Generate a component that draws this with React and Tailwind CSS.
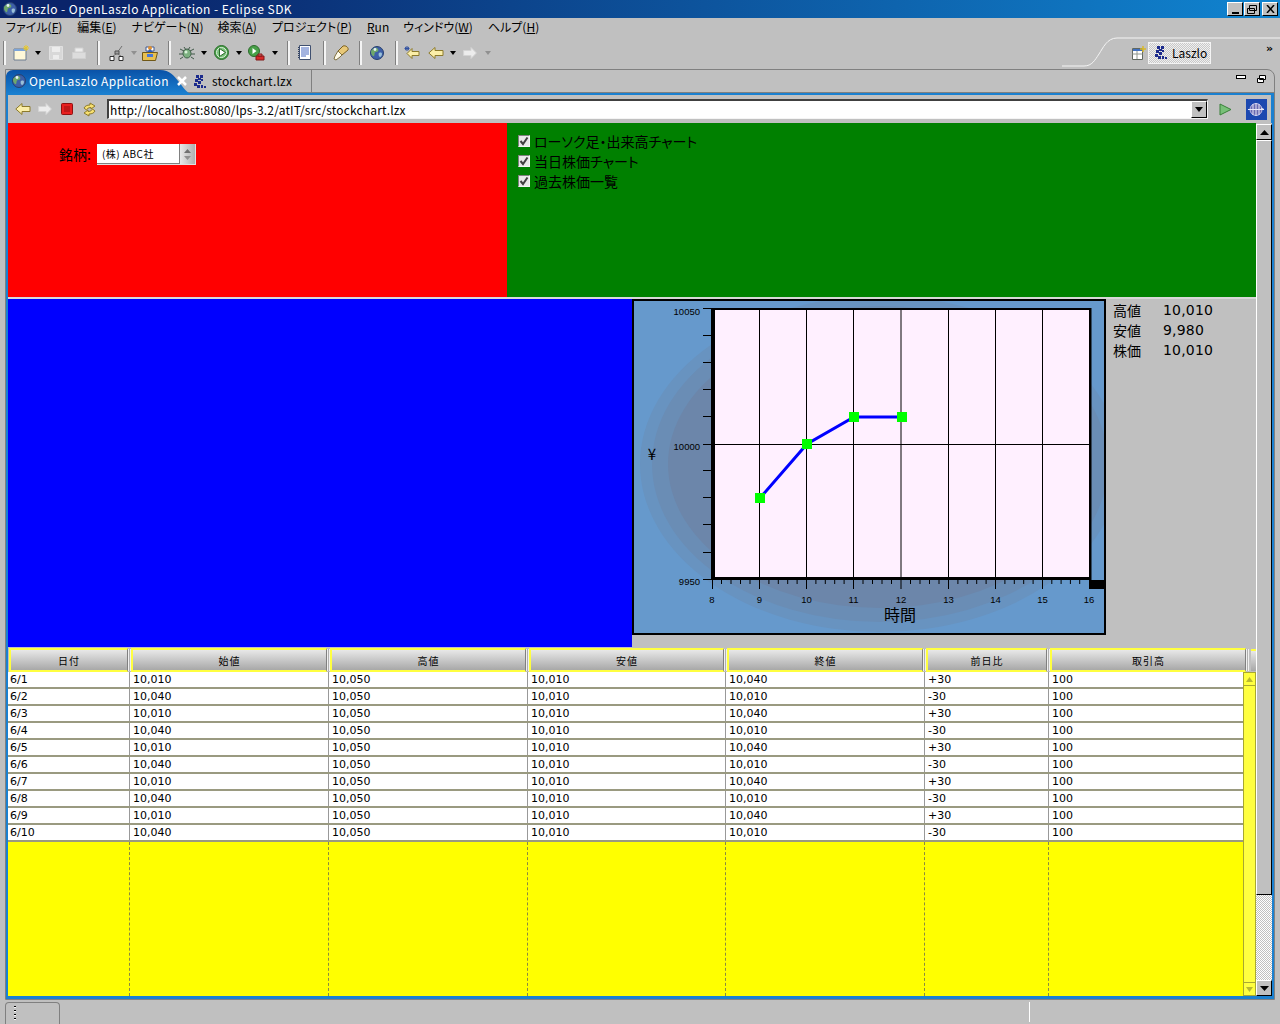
import React from "react";

const UI = "font-['Noto_Sans_CJK_JP','Liberation_Sans',sans-serif] [font-feature-settings:'palt']";
const DV = "font-['DejaVu_Sans','Noto_Sans_CJK_JP',sans-serif]";
const RAISED = "border border-t-white border-l-white border-r-black border-b-black";

const Sep = ({ className }) => <div className={"w-[3px] h-[24px] bg-[#f4f4f4] border-l border-[#808080] shrink-0 " + className} />;
const Drop = ({ className, dim }) => (
  <svg width="6" height="4" viewBox="0 0 6 4" className={"shrink-0 " + className}>
    <path d="M0 0h6L3 4z" fill={dim ? "#909090" : "#000"} />
  </svg>
);
const Ico = ({ className, w = 16, h = 16, children }) => (
  <svg width={w} height={h} viewBox={`0 0 ${w} ${h}`} className={"shrink-0 " + (className || "")}>{children}</svg>
);

const Back = ({ className, dim }) => (
  <Ico className={className} w={16} h={12}>
    <path d="M7 .5L.8 6 7 11.5V8.5h8v-5H7z" fill="#fbeea8" stroke="#8c7a2c" />
  </Ico>
);
const Fwd = ({ className }) => (
  <Ico className={className} w={14} h={12}>
    <path d="M8 .5L13.4 6 8 11.5V8.5H.6v-5H8z" fill="#ececec" stroke="#d4d4d4" />
  </Ico>
);
const Globe = ({ className, s = 14 }) => (
  <svg width={s} height={s} viewBox="0 0 14 14" className={"shrink-0 " + (className || "")}>
    <circle cx="7" cy="7" r="6.5" fill="#3d5fa8" stroke="#27406f" />
    <path d="M3 3c2-2 4-1 5 0s0 3-2 3-1 3-2 4-3-2-3-4 1-2 2-3z" fill="#6fa86a" />
    <path d="M9 7c2-1 3 0 3 1s-1 3-2 3-2-3-1-4z" fill="#9ac0d8" />
    <circle cx="5" cy="3.5" r="1.4" fill="#e8f0f8" />
  </svg>
);
const Lz = ({ className }) => (
  <Ico className={className} w={13} h={13}>
    <g fill="#1c2b8c">
      <rect x="2" y="0" width="3" height="3" /><rect x="6" y="0" width="3" height="3" />
      <rect x="4" y="3" width="3" height="2" /><rect x="1" y="4" width="3" height="3" />
      <rect x="7" y="4" width="2" height="2" /><rect x="4" y="6" width="3" height="3" />
      <rect x="0" y="8" width="3" height="3" /><rect x="3" y="10" width="3" height="3" />
      <rect x="7" y="10" width="2" height="3" /><rect x="10" y="11" width="2" height="2" />
    </g>
  </Ico>
);

function MainToolbar() {
  return (
    <div className="h-[33px] flex items-center shrink-0">
      <Sep className="ml-[3px]" />
      <Ico className="ml-[7px]" w={17}>
        <path d="M1 4h12v11H1z" fill="#fff8d8" stroke="#6c7c90" /><path d="M1 4h12v2H1z" fill="#7ca4d8" />
        <path d="M13 0v6M10 3h6M11 1l4 4M15 1l-4 4" stroke="#e8c828" />
      </Ico>
      <Drop className="ml-[5px]" />
      <Ico className="ml-[8px]" w={14} h={14}>
        <path d="M.5.5h13v13H.5z" fill="#d8d8d8" stroke="#e0e0e0" /><path d="M3 1h8v5H3zM4 9h6v4H4z" fill="#ececec" />
      </Ico>
      <Ico className="ml-[9px]" w={14} h={12}>
        <path d="M3 1h8v4H3z" fill="#ececec" stroke="#d0d0d0" /><path d="M.5 5.5h13v6H.5z" fill="#dcdcdc" stroke="#d0d0d0" />
      </Ico>
      <Sep className="ml-[11px]" />
      <Ico className="ml-[8px]" w={18}>
        <path d="M9 8L4 12M9 8l5 4M9 8l5-7" stroke="#707070" fill="none" />
        <path d="M2 11.500h4v4H2zM11 11.500h4v4h-4z" fill="#fff" stroke="#303030" /><path d="M7 6h4v3H7z" fill="#a0a0a0" stroke="#505050" />
      </Ico>
      <Drop className="ml-[5px]" dim />
      <Ico className="ml-[5px]" w={16}>
        <path d="M.5 7.500h15l-2 8H.5z" fill="#e8c050" stroke="#705818" /><path d="M4 6h8V2H4z" fill="#fff" stroke="#405890" />
        <circle cx="8" cy="3" r="2" fill="#e09030" /><path d="M5 7l3-3 3 3z" fill="#3060c0" /><path d="M5 9h6v3H5z" fill="#4878d8" />
      </Ico>
      <Sep className="ml-[10px]" />
      <Ico className="ml-[8px]" w={16}>
        <ellipse cx="8" cy="8.500" rx="4" ry="4.500" fill="#7cb080" stroke="#3f5f48" />
        <path d="M1 4l4 2M15 4l-4 2M0 9h4M16 9h-4M1 14l3-2M15 14l-3-2M5 2l2 3M11 2L9 5" stroke="#405848" />
        <circle cx="7" cy="7" r="1.500" fill="#d8f0d8" />
      </Ico>
      <Drop className="ml-[6px]" />
      <Ico className="ml-[7px]" w={15} h={15}>
        <circle cx="7.500" cy="7.500" r="7" fill="#48a048" stroke="#2c6c2c" /><circle cx="7.500" cy="7.500" r="5" fill="#78c078" stroke="#e0f0e0" />
        <path d="M5.500 3.500l6 4-6 4z" fill="#fff" stroke="#286828" />
      </Ico>
      <Drop className="ml-[7px]" />
      <Ico className="ml-[6px]" w={18}>
        <circle cx="6" cy="6" r="5.500" fill="#48a048" stroke="#2c6c2c" /><path d="M4.500 3l4 3-4 3z" fill="#fff" />
        <path d="M8 11h8v4H8z" fill="#d82828" stroke="#801818" /><path d="M10 9h4v2h-4z" fill="#e06060" stroke="#801818" />
      </Ico>
      <Drop className="ml-[6px]" />
      <Sep className="ml-[9px]" />
      <Ico className="ml-[8px]" w={13} h={15}>
        <path d="M1.500.5h11v14h-11z" fill="#fff" stroke="#405070" /><path d="M3 3h8M3 5h8M3 7h8M3 9h8M3 11h5" stroke="#4868c0" />
        <path d="M.5 2v11" stroke="#304060" strokeDasharray="1 1" />
      </Ico>
      <Sep className="ml-[12px]" />
      <Ico className="ml-[7px]" w={17}>
        <path d="M10 1c3-1 6 2 5 4l-6 5-4-4z" fill="#e8c878" stroke="#7a6020" /><path d="M5 6l4 4-2 2-4 3-2-1 1-3z" fill="#fffbe8" stroke="#807040" />
      </Ico>
      <Sep className="ml-[9px]" />
      <Globe className="ml-[8px]" />
      <Sep className="ml-[11px]" />
      <Ico className="ml-[6px]" w={16} h={14}>
        <path d="M8 2.500L3 7.500l5 5v-3h7v-4H8z" fill="#fbeea8" stroke="#8c7a2c" />
        <path d="M3 0v5M.5 2.500h5M1 1l4 3M5 1L1 4" stroke="#3050a0" />
      </Ico>
      <Back className="ml-[8px]" />
      <Drop className="ml-[6px]" />
      <Fwd className="ml-[7px]" />
      <Drop className="ml-[8px]" dim />
      <div className="flex-1" />
      <div className="relative w-[195px] h-[33px] shrink-0 flex items-center">
        <svg width="218" height="33" viewBox="0 0 218 33" className="absolute right-0 top-0">
          <path d="M0 30h22c8 0 11-6 15-12s8-16 18-16h163" fill="none" stroke="#f4f4f4" />
        </svg>
        <div className="ml-[47px] relative"><Ico w={14} h={14}>
          <path d="M.5 2.500h10v11H.5z" fill="#fff" stroke="#606860" /><path d="M1 3h9v2H1z" fill="#4070c0" /><path d="M.5 8h10M5 5v8" stroke="#909890" />
          <path d="M11 0v6M8 3h6" stroke="#d8b828" strokeWidth="1.500" />
        </Ico></div>
        <div className={"relative ml-[2px] w-[63px] h-[22px] border border-[#f4f4f4] flex items-center pl-[6px] bg-[repeating-conic-gradient(#c8c8c8_0_25%,#f0f0f0_0_50%)] bg-[length:2px_2px] text-[12px] text-black " + UI}>
          <Lz /><span className="ml-[4px] leading-none">Laszlo</span>
        </div>
        <span className="relative ml-[55px] mt-[-9px] text-[11px] leading-none font-['DejaVu_Sans'] font-bold text-black">»</span>
      </div>
    </div>
  );
}

const Btn3 = ({ className, children }) => (
  <div className={"bg-[#c0c0c0] border border-t-white border-l-white border-r-black border-b-black flex items-center justify-center " + className}>{children}</div>
);

function ScrollBar() {
  return (
    <div className="w-[16px] flex flex-col bg-[repeating-conic-gradient(#c0c0c0_0_25%,#fff_0_50%)] bg-[length:2px_2px] shrink-0">
      <div className="h-px bg-[#c0c0c0]" />
      <Btn3 className="h-[16px] w-[16px]"><svg width="9" height="5"><path d="M0 5h9L4.500 0z" /></svg></Btn3>
      <Btn3 className="h-[755px] w-[16px]" />
      <div className="flex-1" />
      <Btn3 className="h-[16px] w-[16px]"><svg width="9" height="5"><path d="M0 0h9L4.500 5z" /></svg></Btn3>
    </div>
  );
}

const Check = () => (
  <div className="w-[12px] h-[12px] bg-[#e8e8e8] border border-t-[#808080] border-l-[#808080] border-r-[#f4f4f4] border-b-[#f4f4f4] shrink-0 flex items-center justify-center">
    <svg width="10" height="10" viewBox="0 0 10 10"><path d="M1.500 5l2.500 3 4.500-6.500" fill="none" stroke="#404040" strokeWidth="2" /></svg>
  </div>
);

function Chart() {
  const xs = [712, 759.5, 806.5, 853.5, 901, 948.5, 995.5, 1042.5, 1089];
  const ys = [309, 336, 363, 390, 417, 445, 471, 498, 525, 553, 580];
  const minor = [];
  for (let i = 0; i < 8; i++) for (let j = 1; j < 5; j++) minor.push(xs[i] + ((xs[i + 1] - xs[i]) * j) / 5);
  const f = { fontFamily: "'Liberation Sans',sans-serif", fontSize: 9.5, fill: "#000" };
  return (
    <div className="w-[474px] h-[336px] border-2 border-black bg-[#6699cc] shrink-0">
      <svg width="470" height="332" viewBox="634 302 470 332" className="block">
        <defs>
          <clipPath id="c"><rect x="634" y="302" width="470" height="332" /></clipPath>
        </defs>
        <g clipPath="url(#c)">
          <ellipse cx="880" cy="465" rx="240" ry="168" fill="#6893c0" />
          <ellipse cx="880" cy="465" rx="228" ry="158" fill="#6a8db5" />
          <ellipse cx="880" cy="465" rx="212" ry="144" fill="#6c86aa" />
        </g>
        <rect x="713" y="310" width="376" height="270" fill="#fff0ff" />
        {[759.5, 806.5, 853.5, 901, 948.5, 995.5, 1042.5].map((x) => <line key={x} x1={x} x2={x} y1="310" y2="590" stroke="#000" />)}
        <line x1="713" x2="1089" y1="445.500" y2="445.500" stroke="#000" />
        <rect x="711" y="309" width="4" height="272" fill="#000" />
        <rect x="711" y="309" width="380" height="2" fill="#000" />
        <rect x="711" y="578" width="380" height="3" fill="#000" />
        <rect x="1089" y="309" width="2.500" height="272" fill="#000" />
        <rect x="1089" y="581" width="15" height="9" fill="#000" />
        {ys.map((y) => <line key={y} x1="703" x2="712" y1={y + 0.5} y2={y + 0.5} stroke="#000" />)}
        <line x1="712.500" x2="712.500" y1="581" y2="590" stroke="#000" />
        {minor.map((x) => <line key={x} x1={x} x2={x} y1="581" y2="585" stroke="#000" />)}
        <polyline points="760,499 807,445 854,418 902,418" fill="none" stroke="#0000ff" strokeWidth="3" />
        {[[760, 499], [807, 445], [854, 418], [902, 418]].map(([x, y]) => <rect key={x} x={x - 5} y={y - 5} width="10" height="10" fill="#00ff00" />)}
        <text x="700" y="316" textAnchor="end" style={f}>10050</text>
        <text x="700" y="451" textAnchor="end" style={f}>10000</text>
        <text x="700" y="586" textAnchor="end" style={f}>9950</text>
        {xs.map((x, i) => <text key={x} x={x} y="604" textAnchor="middle" style={f}>{8 + i}</text>)}
        <text x="652" y="461" textAnchor="middle" style={{ ...f, fontSize: 15, fontFamily: "'Noto Sans CJK JP',sans-serif" }}>¥</text>
        <text x="900" y="622" textAnchor="middle" style={{ ...f, fontSize: 16, fontFamily: "'Noto Sans CJK JP',sans-serif" }}>時間</text>
      </svg>
    </div>
  );
}

const COLS = ["w-[121px]", "w-[199px]", "w-[199px]", "w-[198px]", "w-[199px]", "w-[124px]", "w-[195px]"];
const HEAD = [
  ["日付", "w-[122px]"], ["始値", "w-[199px]"], ["高値", "w-[199px]"], ["安値", "w-[198px]"],
  ["終値", "w-[199px]"], ["前日比", "w-[124px]"], ["取引高", "w-[199px]"],
];
const rows = Array.from({ length: 10 }, (_, i) =>
  i % 2 === 0
    ? [`6/${i + 1}`, "10,010", "10,050", "10,010", "10,040", "+30", "100"]
    : [`6/${i + 1}`, "10,040", "10,050", "10,010", "10,010", "-30", "100"]
);

function DataTable() {
  return (
    <>
      <div className="h-[25px] pt-px pl-px flex shrink-0">
        {HEAD.map(([t, w]) => (
          <div key={t} className={"flex h-[24px] shrink-0 " + w}>
            <div className={"flex-1 border-t-2 border-l-2 border-[#ffff40] border-r border-r-[#808080] border-b-2 border-b-[#ffff40] bg-[linear-gradient(#e8e8e8,#a8a8a8)] flex items-center justify-center text-[10px] tracking-[1px] text-black " + UI}>{t}</div>
            <div className="w-[3px] bg-[#b0b0b0] border-x border-[#f0f0f0] my-px" />
          </div>
        ))}
        <div className="ml-[2px] flex-1 my-px bg-[linear-gradient(#e8e8e8,#a8a8a8)] border-t-2 border-[#ffff40]" />
      </div>
      <div className="flex-1 flex min-h-0 bg-[#ffff00]">
        <div className="w-[1235px] flex flex-col shrink-0">
          {rows.map((r) => (
            <div key={r[0]} className={"h-[17px] flex bg-white border-b-2 border-b-[#9a9a80] " + DV}>
              {r.map((c, i) => (
                <div key={i} className={"h-[15px] flex items-center text-[11px] leading-none text-black shrink-0 " + COLS[i] + (i === 0 ? " pl-[2px]" : " pl-[3px] border-l border-[#999999]")}>{c}</div>
              ))}
            </div>
          ))}
          <div className="flex-1 flex">
            {COLS.map((w, i) => <div key={i} className={"shrink-0 " + w + (i === 0 ? "" : " border-l border-dashed border-[#8a8a40]")} />)}
          </div>
        </div>
        <div className="w-[13px] bg-[#ffff40] border border-[#a8a830] flex flex-col shrink-0">
          <div className="h-[13px] border-b border-[#a8a830] flex items-center justify-center"><svg width="7" height="5"><path d="M0 5h7L3.500 0z" fill="#b8b830" /></svg></div>
          <div className="flex-1" />
          <div className="h-[13px] border-t border-[#a8a830] flex items-center justify-center"><svg width="7" height="5"><path d="M0 0h7L3.500 5z" fill="#b8b830" /></svg></div>
        </div>
      </div>
    </>
  );
}

function Browser() {
  return (
    <div className="mx-[5px] w-[1270px] h-[931px] border border-[#808080] rounded-tr-[8px] flex flex-col shrink-0">
      <div className="h-[23px] flex items-stretch shrink-0 border-b border-[#808080] relative">
        <div className="relative w-[187px] h-[24px] shrink-0 z-10">
          <svg width="187" height="24" viewBox="0 0 187 24" className="absolute left-0 top-0">
            <defs><linearGradient id="t" x1="0" y1="0" x2="0" y2="1"><stop offset="0" stopColor="#0a52a8" /><stop offset="1" stopColor="#1a80d0" /></linearGradient></defs>
            <path d="M0 24V7c0-4 3-7 7-7h147c10 0 14 6 19 12s8 12 14 12z" fill="url(#t)" />
          </svg>
          <div className={"relative h-[22px] flex items-center pl-[6px] text-white text-[12px] " + UI}>
            <Globe />
            <span className="ml-[3px] tracking-[0.35px] leading-none">OpenLaszlo Application</span>
            <svg width="10" height="10" viewBox="0 0 10 10" className="ml-[8px]"><path d="M1 1l8 8M9 1L1 9" stroke="#fff" strokeWidth="2.500" /></svg>
          </div>
        </div>
        <div className={"w-[119px] border-r border-[#808080] flex items-center text-black text-[12px] shrink-0 " + UI}>
          <Lz className="ml-[1px]" />
          <span className="ml-[5px] leading-none tracking-[0.2px]">stockchart.lzx</span>
        </div>
        <div className="flex-1" />
        <div className="flex items-start pt-[5px] pr-[8px] gap-[11px]">
          <div className="w-[10px] h-[4px] bg-white border border-black" />
          <svg width="9" height="8" viewBox="0 0 9 8"><path d="M2.500.500h6v4h-6zM.500 3.500h6v4h-6z" fill="#fff" stroke="#000" /></svg>
        </div>
      </div>
      <div className="flex-1 border-2 border-r-[3px] border-[#1a80d0] border-b-[3px] flex flex-col min-h-0">
        <div className="h-[28px] flex items-center shrink-0">
          <Back className="ml-[7px]" />
          <Fwd className="ml-[7px]" />
          <Ico className="ml-[9px]" w={12} h={12}>
            <rect x=".5" y=".5" width="11" height="11" rx="1" fill="#e82020" stroke="#901010" /><rect x="3" y="3" width="6" height="6" fill="#c01818" />
          </Ico>
          <Ico className="ml-[9px]" w={15} h={15}>
            <path d="M8 1l5 3-4 3V5.500C6 5.500 5 7 4.500 8L2 6c1-2 3-3 6-3z" fill="#f8e070" stroke="#8c7a2c" />
            <path d="M7 14l-5-3 4-3v1.500c3 0 4-1.500 4.500-2.500l2.500 2c-1 2-3 3-6 3z" fill="#f8e070" stroke="#8c7a2c" />
          </Ico>
          <div className="ml-[10px] w-[1101px] h-[20px] bg-white border-t-2 border-l-2 border-t-[#404040] border-l-[#404040] border-r border-b border-r-[#f4f4f4] border-b-[#f4f4f4] flex items-center shrink-0 relative">
            <span className={"flex-1 pl-[1px] text-[12px] leading-none text-black tracking-[0.15px] " + UI}>http://localhost:8080/lps-3.2/atIT/src/stockchart.lzx</span>
            <Btn3 className="w-[16px] h-[17px]"><svg width="8" height="5"><path d="M0 0h8L4 5z" /></svg></Btn3>
          </div>
          <Ico className="ml-[11px]" w={13} h={13}>
            <path d="M1 1l11 5.500L1 12z" fill="#78c078" stroke="#388038" />
          </Ico>
          <div className="ml-[14px] w-[21px] h-[21px] bg-[#1c48b0] flex items-center justify-center shrink-0">
            <svg width="17" height="17" viewBox="0 0 17 17">
              <circle cx="8" cy="8.500" r="6" fill="#6868b0" stroke="#c0c0e8" />
              <path d="M0 8.500h16l-3-1.500M8 2v13M5 3v11M11 3v11" fill="none" stroke="#e8e8f8" />
            </svg>
          </div>
        </div>
        <div className="flex-1 flex min-h-0">
          <div className="w-[1248px] flex flex-col shrink-0">
            <div className="h-[174px] flex shrink-0">
              <div className="w-[499px] bg-[#ff0000] pt-[21px] pl-[51px] flex items-start shrink-0">
                <span className={"text-[14px] leading-[20px] text-black " + UI}>銘柄:</span>
                <div className="ml-[6px] w-[99px] h-[21px] flex bg-white border-b border-r border-[#e0e0e0]">
                  <div className={"flex-1 pl-[5px] flex items-center text-[10px] leading-none text-black tracking-[0.5px] border-r border-b border-[#808080] " + UI}>(株) ABC社</div>
                  <div className="w-[15px] flex flex-col items-center justify-center gap-[3px] bg-[linear-gradient(90deg,#e8e8e8,#b0b0b0)]">
                    <svg width="7" height="4"><path d="M0 4h7L3.500 0z" fill="#707070" /></svg>
                    <svg width="7" height="4"><path d="M0 0h7L3.500 4z" fill="#909090" /></svg>
                  </div>
                </div>
              </div>
              <div className={"flex-1 bg-[#008000] pt-[8px] pl-[11px] flex flex-col text-[14px] text-black " + UI}>
                {["ローソク足・出来高チャート", "当日株価チャート", "過去株価一覧"].map((t) => (
                  <div key={t} className="h-[20px] flex items-center gap-[4px]"><Check /><span className="leading-none">{t}</span></div>
                ))}
              </div>
            </div>
            <div className="h-[2px] bg-[#d8d8d8] shrink-0" />
            <div className="h-[348px] flex shrink-0">
              <div className="w-[624px] bg-[#0000ff] shrink-0" />
              <Chart />
              <div className={"pl-[7px] pt-[1px] text-[14px] text-black " + DV}>
                {[["高値", "10,010"], ["安値", "9,980"], ["株価", "10,010"]].map(([a, b]) => (
                  <div key={a} className="h-[20px] flex items-center">
                    <span className="w-[50px] font-['Noto_Sans_CJK_JP']">{a}</span><span className="leading-none tracking-[0.2px]">{b}</span>
                  </div>
                ))}
              </div>
            </div>
            <DataTable />
          </div>
          <ScrollBar />
        </div>
      </div>
    </div>
  );
}

export default function App() {
  const menu = [
    ["ファイル(", "F", ")", "ml-[6px]"], ["編集(", "E", ")", "ml-[15px]"], ["ナビゲート(", "N", ")", "ml-[15px]"],
    ["検索(", "A", ")", "ml-[14px]"], ["プロジェクト(", "P", ")", "ml-[15px]"], ["", "R", "un", "ml-[15px]"],
    ["ウィンドウ(", "W", ")", "ml-[14px]"], ["ヘルプ(", "H", ")", "ml-[15px]"],
  ];
  return (
    <div className="w-[1280px] h-[1024px] bg-[#c0c0c0] flex flex-col overflow-hidden">
      <div className="h-[18px] bg-[linear-gradient(90deg,#0a246a,#0a246a_10%,#1084d0)] flex items-center shrink-0">
        <Globe className="ml-[3px]" />
        <span className={"ml-[3px] text-white text-[12px] leading-none tracking-[0.45px] " + UI}>Laszlo - OpenLaszlo Application - Eclipse SDK</span>
        <div className="flex-1" />
        <Btn3 className="w-[16px] h-[14px]"><div className="w-[7px] h-[2px] bg-black mt-[7px]" /></Btn3>
        <Btn3 className="ml-px w-[16px] h-[14px]"><svg width="10" height="9" viewBox="0 0 10 9"><path d="M2.500.500h7v5h-7zM.500 3.500h7v5h-7z" fill="#c0c0c0" stroke="#000" /></svg></Btn3>
        <Btn3 className="ml-[2px] mr-[2px] w-[16px] h-[14px]"><svg width="9" height="8" viewBox="0 0 9 8"><path d="M1 0l7 8M8 0L1 8" stroke="#000" strokeWidth="1.500" /></svg></Btn3>
      </div>
      <div className={"h-[18px] flex items-center text-[12px] leading-none text-black shrink-0 " + UI}>
        {menu.map(([a, u, b, m]) => <span key={u} className={m}>{a}<u>{u}</u>{b}</span>)}
      </div>
      <MainToolbar />
      <Browser />
      <div className="flex-1 flex items-stretch pt-[2px] relative">
        <div className="ml-[5px] w-[55px] border border-b-0 border-[#808080] rounded-t-[4px] pl-[8px] pt-[3px] flex flex-col gap-[2px]">
          {[0, 1, 2, 3].map((i) => <div key={i} className="w-[2px] h-[2px] bg-black border-b border-white" />)}
        </div>
        <div className="ml-[969px] mb-[2px] w-px bg-white" />
      </div>
    </div>
  );
}
